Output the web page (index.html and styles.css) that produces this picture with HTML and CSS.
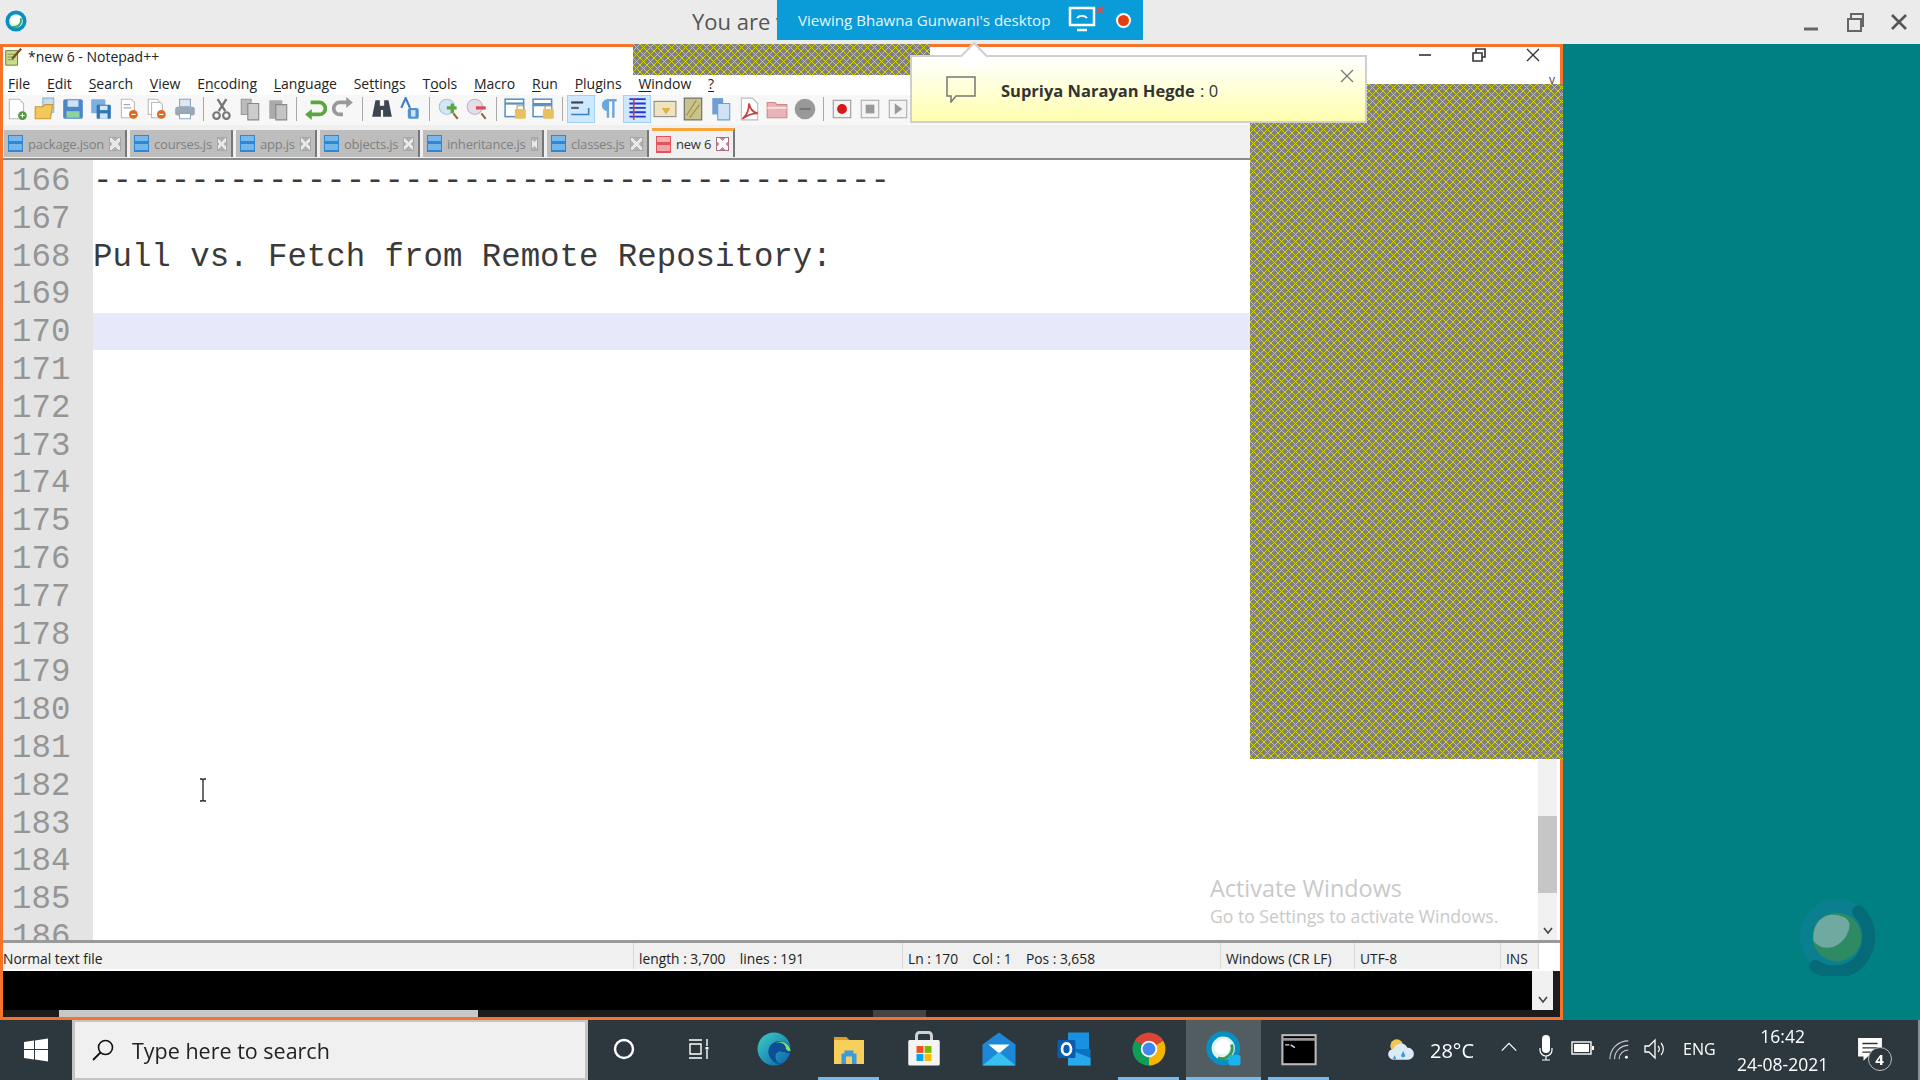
FILE: index.html
```html
<!DOCTYPE html>
<html lang="en">
<head>
  <meta charset="UTF-8" />
  <title>*new 6 - Notepad++</title>
  <link rel="stylesheet" href="styles.css">
</head>
<body>
  <div class="stage">
    <header class="meeting-bar">
      <svg class="webex-logo" viewBox="0 0 24 24"><circle cx="12" cy="12" r="9.5" fill="#dff3e8" stroke="#0a8fc4" stroke-width="4"/><path d="M7 13a6 6 0 0 1 8-7c2 1 3 3 2 6-2 4-7 5-10 1z" fill="#fff"/><path d="M17 9a7 7 0 0 1-9 9" fill="none" stroke="#35a862" stroke-width="2"/></svg>
      <span class="meeting-text">You are v</span>
      <div class="meeting-ctrls">
        <svg viewBox="0 0 24 24"><path d="M5 19h14" stroke="#666" stroke-width="3"/></svg>
        <svg viewBox="0 0 24 24"><path d="M5 9h13v12H5zM8 9V4h12v12h-2" fill="none" stroke="#666" stroke-width="2"/></svg>
        <svg viewBox="0 0 24 24"><path d="M5 5l14 14M19 5L5 19" stroke="#555" stroke-width="2.6"/></svg>
      </div>
    </header>

    <main class="desktop">
      <section class="npp">
        <div class="npp-title">
          <svg class="npp-icon" viewBox="0 0 22 22"><path d="M3 4h13v16H3z" fill="#c9dc8a" stroke="#5d7a2c"/><path d="M5 8h9M5 11h9M5 14h7" stroke="#7d8f50"/><path d="M10 13L20 2" stroke="#7a4a1c" stroke-width="2.4"/></svg>
          <span>*new 6 - Notepad++</span>
          <div class="npp-ctrls">
            <svg viewBox="0 0 16 16"><path d="M2 8h12" stroke="#333" stroke-width="1.6"/></svg>
            <svg viewBox="0 0 16 16"><path d="M2 6h9v8H2zM5 6V2h9v8h-3" fill="none" stroke="#333" stroke-width="1.6"/></svg>
            <svg viewBox="0 0 16 16"><path d="M2 2l12 12M14 2L2 14" stroke="#333" stroke-width="1.4"/></svg>
          </div>
        </div>

        <nav class="npp-menu">
          <span><u>F</u>ile</span><span><u>E</u>dit</span><span><u>S</u>earch</span><span><u>V</u>iew</span><span>E<u>n</u>coding</span><span><u>L</u>anguage</span><span>Se<u>t</u>tings</span><span>T<u>o</u>ols</span><span><u>M</u>acro</span><span><u>R</u>un</span><span><u>P</u>lugins</span><span><u>W</u>indow</span><span><u>?</u></span>
          <i class="menu-x">v</i>
        </nav>

        <div class="toolbar">
          <svg viewBox="0 0 22 22"><path d="M4 2h9l4 4v14H4z" fill="#fff" stroke="#bbb"/><circle cx="16" cy="17" r="4" fill="#4f9a3c"/><path d="M14 17h4M16 15v4" stroke="#fff"/></svg>
          <svg viewBox="0 0 22 22"><path d="M9 1h10v13H9z" fill="#c8dcf0" stroke="#8fb0d0"/><path d="M2 9h7l2-2h7l-2 13H2z" fill="#f2c75c" stroke="#c99a2e"/></svg>
          <svg viewBox="0 0 22 22"><rect x="2" y="2" width="18" height="18" rx="2" fill="#4c86c8"/><rect x="6" y="3" width="10" height="6" fill="#cfe2f5"/><rect x="5" y="13" width="12" height="6" fill="#8fd0a0"/></svg>
          <svg viewBox="0 0 22 22"><rect x="2" y="2" width="13" height="13" rx="1" fill="#7db0dc"/><rect x="7" y="7" width="13" height="13" rx="1" fill="#2f76b8"/><rect x="10" y="8" width="7" height="4" fill="#d5e6f5"/><rect x="10" y="15" width="7" height="5" fill="#cfe2f5"/></svg>
          <svg viewBox="0 0 22 22"><path d="M4 2h9l3 3v14H4z" fill="#fff" stroke="#bbb"/><path d="M6 7h6M6 10h7" stroke="#aaa"/><circle cx="15" cy="16" r="4" fill="#dd6a20"/><path d="M13 16h4" stroke="#fff"/></svg>
          <svg viewBox="0 0 22 22"><path d="M3 2h8l2 2v12H3z" fill="#fff" stroke="#bbb"/><path d="M6 5h8l2 2v12H6z" fill="#fff" stroke="#bbb"/><circle cx="15" cy="16" r="4" fill="#dd6a20"/><path d="M13 16h4" stroke="#fff"/></svg>
          <svg viewBox="0 0 22 22"><path d="M6 2h10v7H6z" fill="#dce8f2" stroke="#8ea5bb"/><rect x="2" y="9" width="18" height="8" rx="2" fill="#9aa9b8"/><path d="M6 15h10v5H6z" fill="#fff" stroke="#8ea5bb"/></svg>
          <i class="tool-sep"></i>
          <svg viewBox="0 0 22 22"><path d="M15 2L8 13M7 2l7 11" stroke="#777" stroke-width="2.2"/><circle cx="6" cy="17" r="3" fill="none" stroke="#777" stroke-width="2"/><circle cx="15" cy="17" r="3" fill="none" stroke="#777" stroke-width="2"/></svg>
          <svg viewBox="0 0 22 22"><path d="M3 2h9v14H3z" fill="#bbb" stroke="#999"/><path d="M9 6h10v15H9z" fill="#ccc" stroke="#888"/></svg>
          <svg viewBox="0 0 22 22"><path d="M3 3h12v17H3z" fill="#aaa"/><path d="M9 7h10v14H9z" fill="#c4c4c4" stroke="#888"/></svg>
          <i class="tool-sep"></i>
          <svg viewBox="0 0 22 22"><path d="M7 5h8a5 5 0 0 1 0 11H6" fill="none" stroke="#5aa63c" stroke-width="3.4"/><path d="M8 11l-6 5 6 5z" fill="#5aa63c"/></svg>
          <svg viewBox="0 0 22 22"><path d="M15 5H8a5 5 0 0 0 0 11h3" fill="none" stroke="#999" stroke-width="3.4"/><path d="M14 0l6 5-6 5z" fill="#999"/></svg>
          <i class="tool-sep wide"></i>
          <svg viewBox="0 0 22 22"><path d="M5 3h4v5h4V3h4l3 15h-8v-6h-2v6H2z" fill="#3d4650"/></svg>
          <svg viewBox="0 0 22 22"><path d="M3 10L7 1l4 9" fill="none" stroke="#3c7fc0" stroke-width="2"/><rect x="9" y="10" width="10" height="10" rx="2" fill="#4d94cf"/><path d="M12 12h4v6h-4z" fill="#cfe4f5"/></svg>
          <i class="tool-sep wide"></i>
          <svg viewBox="0 0 22 22"><circle cx="9" cy="9" r="7" fill="#d5e6f5" stroke="#a9c4dd"/><path d="M9 10h9M14 6v9" stroke="#5aa63c" stroke-width="3"/><path d="M15 15l4 5" stroke="#8a6d3b" stroke-width="2"/></svg>
          <svg viewBox="0 0 22 22"><circle cx="9" cy="9" r="7" fill="#e6dcea" stroke="#c2b4cd"/><path d="M10 10h9" stroke="#d85050" stroke-width="3"/><path d="M15 15l4 5" stroke="#8a6d3b" stroke-width="2"/></svg>
          <i class="tool-sep wide"></i>
          <svg viewBox="0 0 22 22"><rect x="1" y="2" width="17" height="16" fill="#fff" stroke="#5c8fc0" stroke-width="1.4"/><path d="M1 6h17" stroke="#5c8fc0" stroke-width="2"/><rect x="10" y="11" width="10" height="9" rx="1" fill="#e8c060"/><path d="M12 11V8h6v3" fill="none" stroke="#c99a2e"/></svg>
          <svg viewBox="0 0 22 22"><rect x="1" y="2" width="17" height="16" fill="#fff" stroke="#5c8fc0" stroke-width="1.4"/><path d="M1 7h17" stroke="#5c8fc0" stroke-width="3"/><rect x="10" y="11" width="10" height="9" rx="1" fill="#e8c060"/><path d="M12 11V8h6v3" fill="none" stroke="#c99a2e"/></svg>
          <i class="tool-sep"></i>
          <svg class="on" viewBox="0 0 22 22"><path d="M2 5h11" stroke="#444" stroke-width="2"/><path d="M2 10h7" stroke="#666" stroke-width="2"/><path d="M2 16h12M18 10v6h-5" fill="none" stroke="#3c80c0" stroke-width="1.5"/></svg>
          <svg viewBox="0 0 22 22"><path d="M9 3h9M10 3v16M15 3v16M10 3a4 4 0 0 0 0 9" fill="#6aa7dc" stroke="#6aa7dc" stroke-width="2.2"/></svg>
          <svg class="on" viewBox="0 0 22 22"><path d="M4 2h15M4 6h15M4 10h15M4 14h15M4 18h15" stroke="#2434dd" stroke-width="1.7"/><path d="M8 1v20" stroke="#d04040" stroke-width="1.5"/></svg>
          <svg viewBox="0 0 22 22"><rect x="1" y="4" width="20" height="14" fill="#efe4c0" stroke="#888"/><path d="M8 10h8l-4 6z" fill="#e0b040"/></svg>
          <svg viewBox="0 0 22 22"><rect x="3" y="1" width="16" height="20" fill="#c6c48a" stroke="#666"/><path d="M5 17L14 3M8 19l9-12" stroke="#a6883a"/></svg>
          <svg viewBox="0 0 22 22"><path d="M3 1h10v15H3z" fill="#6f9fd0"/><path d="M8 6h11v15H8z" fill="#cfe2f5" stroke="#6f9fd0"/></svg>
          <svg viewBox="0 0 22 22"><path d="M4 1h10l5 5v15H4z" fill="#fff" stroke="#bbb"/><path d="M5 20c5-4 6-9 6-14 1 5 3 8 8 9-5 0-9 1-14 5z" fill="none" stroke="#c84040" stroke-width="1.6"/></svg>
          <svg viewBox="0 0 22 22"><path d="M2 5h7l2 2h9v12H2z" fill="#e8b4b8" stroke="#c88"/><path d="M2 10h18" stroke="#fff"/></svg>
          <svg viewBox="0 0 22 22"><circle cx="11" cy="11" r="9.5" fill="#999"/><path d="M6 11h10" stroke="#777" stroke-width="2"/></svg>
          <i class="tool-sep"></i>
          <svg viewBox="0 0 22 22"><rect x="3" y="3" width="16" height="16" fill="#f4f4f4" stroke="#999"/><circle cx="11" cy="11" r="4.5" fill="#d81818"/></svg>
          <svg viewBox="0 0 22 22"><rect x="3" y="3" width="16" height="16" fill="#f4f4f4" stroke="#aaa"/><rect x="7" y="7" width="8" height="8" fill="#999"/></svg>
          <svg viewBox="0 0 22 22"><rect x="3" y="3" width="16" height="16" fill="#f4f4f4" stroke="#aaa"/><path d="M8 6l7 5-7 5z" fill="#999"/></svg>
        </div>

        <div class="tabs">
          <div class="tab tab-package"><i class="floppy"></i><span>package.json</span><b class="tab-x"></b></div>
          <div class="tab tab-courses"><i class="floppy"></i><span>courses.js</span><b class="tab-x"></b></div>
          <div class="tab tab-app"><i class="floppy"></i><span>app.js</span><b class="tab-x"></b></div>
          <div class="tab tab-objects"><i class="floppy"></i><span>objects.js</span><b class="tab-x"></b></div>
          <div class="tab tab-inherit"><i class="floppy"></i><span>inheritance.js</span><b class="tab-x"></b></div>
          <div class="tab tab-classes"><i class="floppy"></i><span>classes.js</span><b class="tab-x"></b></div>
          <div class="tab tab-active"><i class="floppy"></i><span>new 6</span><b class="tab-x"></b></div>
        </div>

        <div class="editor">
          <div class="gutter">
            <div>166</div><div>167</div><div>168</div><div>169</div><div>170</div><div>171</div><div>172</div>
            <div>173</div><div>174</div><div>175</div><div>176</div><div>177</div><div>178</div><div>179</div>
            <div>180</div><div>181</div><div>182</div><div>183</div><div>184</div><div>185</div><div>186</div>
          </div>
          <div class="code">
            <div>-----------------------------------------</div>
            <div>&nbsp;</div>
            <div>Pull vs. Fetch from Remote Repository:</div>
            <div>&nbsp;</div>
            <div class="current">&nbsp;</div>
          </div>
          <div class="vscroll">
            <div class="vthumb"></div>
            <svg class="chev" viewBox="0 0 12 8"><path d="M2 1l4 5 4-5" fill="none" stroke="#444" stroke-width="1.6"/></svg>
          </div>
        </div>

        <footer class="status">
          <div>Normal text file</div>
          <div>length : 3,700 &nbsp;&nbsp; lines : 191</div>
          <div>Ln : 170 &nbsp;&nbsp; Col : 1 &nbsp;&nbsp; Pos : 3,658</div>
          <div>Windows (CR LF)</div>
          <div>UTF-8</div>
          <div>INS</div>
          <div></div>
        </footer>

        <div class="console">
          <div class="console-black"></div>
          <div class="console-scroll"><svg class="chev" viewBox="0 0 12 8"><path d="M2 1l4 5 4-5" fill="none" stroke="#444" stroke-width="1.6"/></svg></div>
        </div>
        <div class="hscroll"><div class="hthumb"></div><div class="hdim"></div></div>
      </section>
      <div class="teal"></div>
    </main>

    <footer class="taskbar">
      <svg class="start" viewBox="0 0 24 24"><path d="M0 4l10-1.4V11H0zM11 2.4L24 .6V11H11zM0 12h10v9.4L0 20zM11 12h13v11.4l-13-1.8z" fill="#fff"/></svg>
      <div class="search">
        <svg viewBox="0 0 24 24"><circle cx="14.5" cy="9.5" r="7" fill="none" stroke="#111" stroke-width="1.6"/><path d="M9.5 14.5L2 22" stroke="#111" stroke-width="1.8"/></svg>
        <span>Type here to search</span>
      </div>
      <div class="task-apps">
        <div class="app"><svg viewBox="0 0 24 24"><circle cx="12" cy="12" r="9" fill="none" stroke="#fff" stroke-width="2.4"/></svg></div>
        <div class="app"><svg viewBox="0 0 24 24"><path d="M2 3h13M2 21h13M3 7h11v10H3zM20 2v7M20 13v9" fill="none" stroke="#fff" stroke-width="1.4"/><rect x="18.5" y="10" width="3" height="2.5" fill="#fff"/></svg></div>
        <div class="app"><svg class="big" viewBox="0 0 24 24"><defs><linearGradient id="edgeg" x1="0" y1="0" x2="1" y2="1"><stop offset="0" stop-color="#3bd0c0"/><stop offset="1" stop-color="#0a5fb0"/></linearGradient></defs><circle cx="12" cy="12" r="11" fill="url(#edgeg)"/><path d="M23 14c0-6-5-8-9-7-5 1-7 6-5 10 2 4 6 6 9 5-4 0-5-3-5-5 0-3 3-4 5-3 2 0 3 2 5 0z" fill="#0c4f97"/><path d="M23 13c-1-5-6-7-10-5 4-1 7 1 7 4 1 1 2 2 3 1z" fill="#7fe07a"/></svg></div>
        <div class="app open"><svg class="big" viewBox="0 0 24 24"><path d="M2 4h8l2 2h10v16H2z" fill="#f7cf5a"/><path d="M2 4h8l2 2H2z" fill="#d99f20"/><path d="M7 22v-7h2v-2h6v2h2v7h-3v-5H10v5z" fill="#3c9ae0"/></svg></div>
        <div class="app"><svg class="big" viewBox="0 0 24 24"><path d="M7 7V3a2 2 0 0 1 2-2h6a2 2 0 0 1 2 2v4" fill="none" stroke="#d0d0d0" stroke-width="2"/><rect x="1.500" y="6" width="21" height="17" rx="1" fill="#f4f4f4"/><rect x="7" y="10" width="4.600" height="4.600" fill="#f25022"/><rect x="12.400" y="10" width="4.600" height="4.600" fill="#7fba00"/><rect x="7" y="15.400" width="4.600" height="4.600" fill="#00a4ef"/><rect x="12.400" y="15.400" width="4.600" height="4.600" fill="#ffb900"/></svg></div>
        <div class="app"><svg class="big" viewBox="0 0 24 24"><path d="M1 9l11-8 11 8v14H1z" fill="#1e88d8"/><path d="M5 9h14l-7 6z" fill="#fff"/><path d="M1 23l11-9 11 9z" fill="#38c0f0"/></svg></div>
        <div class="app"><svg class="big" viewBox="0 0 24 24"><path d="M8 1h14v12H8z" fill="#1a90e0"/><path d="M8 12h15v11H8z" fill="#0f70c0"/><path d="M8 12l15 6v5H8z" fill="#28a8e8"/><rect x="1" y="6" width="12" height="12" rx="1" fill="#0a5cb0"/><ellipse cx="7" cy="12" rx="3" ry="3.800" fill="none" stroke="#fff" stroke-width="1.800"/></svg></div>
        <div class="app open"><svg class="big" viewBox="0 0 24 24"><path d="M12 12L2.500 6.500A11 11 0 0 1 21.500 6.500z" fill="#db4437"/><path d="M12 12L2.500 6.500A11 11 0 0 0 12 23z" fill="#0f9d58"/><path d="M12 12L21.500 6.500A11 11 0 0 1 12 23z" fill="#f4b400"/><circle cx="12" cy="12" r="5.500" fill="#fff"/><circle cx="12" cy="12" r="4.300" fill="#4285f4"/></svg></div>
        <div class="app current-app"><svg class="big" viewBox="0 0 24 24"><circle cx="11.500" cy="11.500" r="9.500" fill="#dff3e8" stroke="#0a8fc4" stroke-width="3.500"/><path d="M6 13a6 6 0 0 1 8-7c2 1 3 3 2 6-2 4-7 5-10 1z" fill="#fff"/><path d="M17 9a7 7 0 0 1-9 9" fill="none" stroke="#2f9c5c" stroke-width="2"/><rect x="15" y="16" width="8" height="7" rx="1.500" fill="#1ab4ec"/></svg></div>
        <div class="app open"><svg class="big" viewBox="0 0 26 24"><rect x="1" y="2" width="24" height="21" fill="#000" stroke="#bbb" stroke-width="1.500"/><path d="M1 5h24" stroke="#999" stroke-width="2"/><path d="M3 9h3M7 9l3 2" stroke="#ddd"/></svg></div>
      </div>
      <div class="tray">
        <svg class="weather" viewBox="0 0 28 26"><circle cx="10" cy="9" r="6" fill="#f5c84c"/><path d="M7 22a5 5 0 0 1 0-10 7 7 0 0 1 13-1 5.500 5.500 0 0 1 1 11z" fill="#dbeaf7"/><path d="M16 14l-2 4a2 2 0 0 0 4 0zM8 18l-1.500 3a1.600 1.600 0 0 0 3 0z" fill="#3f9be0"/></svg>
        <span class="temp">28°C</span>
        <svg class="chevup" viewBox="0 0 20 12"><path d="M2 10l8-8 8 8" fill="none" stroke="#fff" stroke-width="1.400"/></svg>
        <svg class="mic" viewBox="0 0 16 28"><rect x="4" y="1" width="8" height="18" rx="4" fill="#fff"/><path d="M2 14v2a6 6 0 0 0 12 0v-2M8 22v4M4 26h8" fill="none" stroke="#fff" stroke-width="1.200"/></svg>
        <svg class="batt" viewBox="0 0 24 16"><rect x="1" y="2" width="19" height="12" fill="none" stroke="#fff" stroke-width="1.400"/><rect x="3" y="4" width="15" height="8" fill="#fff"/><rect x="21" y="6" width="2" height="4" fill="#fff"/></svg>
        <svg class="wifi" viewBox="0 0 24 24"><path d="M2 22A20 20 0 0 1 22 2M7 22A15 15 0 0 1 22 7M12 22a10 10 0 0 1 10-10" fill="none" stroke="#ccc" stroke-width="1.200" transform="translate(-1 0)"/><circle cx="19" cy="20" r="1.600" fill="#fff"/></svg>
        <svg class="speaker" viewBox="0 0 24 24"><path d="M2 9h4l6-6v18l-6-6H2z" fill="none" stroke="#fff" stroke-width="1.300"/><path d="M15 9a4 4 0 0 1 0 6M18 6a9 9 0 0 1 0 12" fill="none" stroke="#fff" stroke-width="1.200"/></svg>
        <span class="lang">ENG</span>
        <div class="clock"><div>16:42</div><div>24-08-2021</div></div>
        <div class="notif">
          <svg viewBox="0 0 24 24"><path d="M1 1h22v17H10l-4 4v-4H1z" fill="#fff"/><path d="M5 6h14M5 10h14M5 14h8" stroke="#333" stroke-width="1.200"/></svg>
          <b class="notif-count">4</b>
        </div>
      </div>
    </footer>

    <!-- cosas que van encima de la ventana -->
    <div class="hatch hatch-top"></div>
    <div class="hatch hatch-right"></div>
    <div class="activate">
      <div class="activate-big">Activate Windows</div>
      <div class="activate-small">Go to Settings to activate Windows.</div>
    </div>
    <svg class="ibeam" viewBox="0 0 10 24"><path d="M2 1h2l1 1 1-1h2M5 2v20M2 23h2l1-1 1 1h2" fill="none" stroke="#222" stroke-width="1.300"/></svg>
    <svg class="float-logo" viewBox="0 0 80 80"><ellipse cx="40" cy="40" rx="38" ry="39" fill="#0a7f90"/><path d="M62 14c14 14 14 34 2 50-10 12-30 16-46 6" fill="none" stroke="#066b78" stroke-width="13" stroke-linecap="round"/><circle cx="40" cy="40" r="25" fill="#2e8a62"/><path d="M16 44c-2-20 12-30 26-26 10 2 14 8 8 20-8 14-24 18-34 6z" fill="#6fa9a0"/></svg>

    <div class="viewing">
      <span>Viewing Bhawna Gunwani's desktop</span>
      <svg class="viewing-icon" viewBox="0 0 36 28"><rect x="2" y="3" width="24" height="17" fill="none" stroke="#fff" stroke-width="2.500"/><path d="M9 13a6 5 0 0 1 10 0" fill="none" stroke="#fff" stroke-width="2"/><path d="M9 25h10" stroke="#fff" stroke-width="2.500"/><path d="M29 2l6 6M35 2l-6 6" stroke="#e04a4a" stroke-width="2"/></svg>
      <i class="rec-dot"></i>
    </div>

    <div class="popup">
      <i class="popup-caret"></i>
      <svg class="popup-bubble" viewBox="0 0 32 28"><path d="M2 2h28v19H11l-5 6v-6H2z" fill="none" stroke="#777" stroke-width="1.500"/></svg>
      <span class="popup-text"><b>Supriya Narayan Hegde</b> : 0</span>
      <svg class="popup-x" viewBox="0 0 14 14"><path d="M1 1l12 12M13 1L1 13" stroke="#777" stroke-width="1.300"/></svg>
    </div>
  </div>
</body>
</html>
```

FILE: styles.css
```css
* {
  box-sizing: border-box;
}

html, body {
  margin: 0;
  height: 100%;
  overflow: hidden;
  background: #008080;
}

.stage {
  position: relative;
  width: 1920px;
  height: 1080px;
  display: flex;
  flex-direction: column;
  overflow: hidden;
  font-family: 'Open Sans', 'Noto Sans', sans-serif;
  filter: blur(0.45px);
}

/* barra de arriba */
.meeting-bar {
  height: 44px;
  flex: none;
  background: #ebebeb;
  display: flex;
  align-items: center;
  padding-left: 5px;
}

.webex-logo {
  width: 22px;
  height: 24px;
  margin-top: -3px;
}

.meeting-text {
  margin-left: 665px;
  margin-top: -3px;
  font-size: 22px;
  color: #555;
  white-space: nowrap;
}

.meeting-ctrls {
  margin-left: auto;
  margin-right: 9px;
  display: flex;
  gap: 20px;
}

.meeting-ctrls svg {
  width: 24px;
  height: 24px;
}

.desktop {
  flex: 1;
  display: flex;
  min-height: 0;
}

.teal {
  flex: 1;
  background: #008080;
}

/* ventana notepad */
.npp {
  width: 1563px;
  flex: none;
  background: #fff;
  border: 3px solid #f5742a;
  display: flex;
  flex-direction: column;
  font-size: 14px;
  color: #222;
}

.npp-title {
  height: 28px;
  flex: none;
  display: flex;
  align-items: flex-start;
  line-height: 20px;
}

.npp-icon {
  width: 20px;
  height: 22px;
  margin-top: -1px;
}

.npp-title span {
  margin-left: 5px;
}

.npp-ctrls {
  margin-left: auto;
  display: flex;
  gap: 38px;
  padding-right: 19px;
}

.npp-ctrls svg {
  width: 16px;
  height: 16px;
}

.npp-menu {
  height: 20px;
  flex: none;
  position: relative;
  display: flex;
  align-items: center;
  gap: 16.8px;
  padding-left: 5px;
  padding-bottom: 4px;
  font-size: 14px;
}

.npp-menu u {
  text-underline-offset: 2px;
}

.menu-x {
  position: absolute;
  right: 5px;
  top: -4px;
  font-style: normal;
  font-size: 12px;
  color: #444;
}

.toolbar {
  height: 30px;
  flex: none;
  background: #f7f7f7;
  display: flex;
  align-items: center;
  padding-bottom: 2px;
}

.toolbar svg {
  width: 28px;
  height: 28px;
  padding: 1px;
  flex: none;
  border: 1px solid transparent;
}

.toolbar svg.on {
  background: #cde8ff;
  border-color: #9fd2fb;
}

.tool-sep {
  width: 1px;
  height: 24px;
  margin: 0 4px;
  flex: none;
  background: #a8a8a8;
}

.tool-sep.wide {
  margin: 0 5px;
}

.tabs {
  height: 35px;
  flex: none;
  display: flex;
  align-items: flex-end;
  gap: 3px;
  background: #f0f0f0;
  border-bottom: 2px solid #8a8a8a;
  padding-left: 1px;
  padding-bottom: 1px;
}

.tab {
  height: 27px;
  display: flex;
  align-items: center;
  gap: 5px;
  padding: 0 4px;
  background: #bdbdbd;
  color: #808080;
  font-size: 13px;
  border-right: 2px solid #777;
  letter-spacing: -0.2px;
  white-space: nowrap;
}

.tab-package { width: 123px; }
.tab-courses { width: 103px; }
.tab-app { width: 81px; }
.tab-objects { width: 100px; }
.tab-inherit { width: 121px; }
.tab-classes { width: 102px; }

.tab-active {
  width: 83px;
  height: 29px;
  background: #f0f0f0;
  color: #333;
  border-top: 3px solid #f9a53a;
}

.floppy {
  width: 15px;
  height: 17px;
  flex: none;
  background: linear-gradient(#79b8ea 0 30%, #2f86d4 30% 55%, #74b6e8 55% 90%, #2f86d4 90%);
  border: 1px solid #2f86d4;
}

.tab-active .floppy {
  background: linear-gradient(#f2b1b1 0 30%, #e2535b 30% 55%, #f0a6a6 55% 90%, #e2535b 90%);
  border-color: #e2535b;
}

.tab-x {
  width: 14px;
  height: 14px;
  margin-left: auto;
  border: 1px solid #a6a6a6;
  background:
    linear-gradient(45deg, transparent 40%, #e8e8e8 40% 60%, transparent 60%),
    linear-gradient(-45deg, transparent 40%, #e8e8e8 40% 60%, transparent 60%),
    #b0b0b0;
}

.tab-active .tab-x {
  border-color: #b06a80;
  background:
    linear-gradient(45deg, transparent 38%, #fff 38% 62%, transparent 62%),
    linear-gradient(-45deg, transparent 38%, #fff 38% 62%, transparent 62%),
    #c08a9a;
}

.editor {
  height: 780px;
  flex: none;
  display: flex;
  overflow: hidden;
  font-family: 'Liberation Mono', monospace;
  font-size: 32.4px;
  line-height: 37.8px;
}

.gutter {
  width: 90px;
  flex: none;
  background: #e4e4e4;
  color: #959595;
  padding: 3px 0 0 9px;
}

.code {
  flex: 1;
  color: #3a3a3a;
  padding-top: 3px;
}

.code div {
  white-space: pre;
}

.code .current {
  margin-top: -1.5px;
  background: #e8e8fb;
}

.vscroll {
  width: 22px;
  flex: none;
  position: relative;
  background: #f0f0f0;
  border-right: 3px solid #fff;
}

.vthumb {
  position: absolute;
  left: 0;
  right: 0;
  top: 656px;
  height: 77px;
  background: #c6c6c6;
}

.vscroll .chev {
  position: absolute;
  left: 4px;
  bottom: 5px;
}

.chev {
  width: 12px;
  height: 8px;
}

.status {
  height: 31px;
  flex: none;
  display: grid;
  grid-template-columns: 631px 269px 318px 134px 146px 38px 1fr;
  background: #f0f0f0;
  border-top: 3px solid #9a9a9a;
  border-bottom: 2px solid #fff;
  font-size: 13.8px;
  line-height: 31px;
  color: #222;
}

.status div {
  height: 26px;
  padding-left: 5px;
  border-right: 1px solid #d8d8d8;
  white-space: nowrap;
}

.status div:first-child {
  padding-left: 0;
}

.status div:last-child {
  background: #fff;
  border: none;
}

.console {
  height: 39px;
  flex: none;
  display: flex;
  background: #1c1c1c;
}

.console-black {
  width: 1529px;
  background: #000;
}

.console-scroll {
  width: 21px;
  background: #f0f0f0;
  display: flex;
  justify-content: center;
  align-items: flex-end;
  padding-bottom: 6px;
}

.hscroll {
  flex: 1;
  position: relative;
  background: #1c1c1c;
}

.hthumb {
  position: absolute;
  left: 56px;
  width: 419px;
  top: 0;
  bottom: 0;
  background: #c8c8c8;
}

.hdim {
  position: absolute;
  left: 870px;
  width: 53px;
  top: 0;
  bottom: 0;
  background: #444;
}

/* trama amarilla donde no llego la imagen */
.hatch {
  position: absolute;
  background-color: #808080;
  background-image:
    linear-gradient(45deg, transparent 45%, #d8d800 45% 55%, transparent 55%),
    linear-gradient(-45deg, transparent 45%, #d8d800 45% 55%, transparent 55%);
  background-size: 7px 7px;
}

.hatch-top {
  left: 633px;
  top: 44px;
  width: 297px;
  height: 31px;
}

.hatch-right {
  left: 1250px;
  top: 84px;
  width: 313px;
  height: 675px;
}

.activate {
  position: absolute;
  left: 1210px;
  top: 872px;
  color: #c9c9c9;
}

.activate-big {
  font-size: 23.4px;
  line-height: 32px;
}

.activate-small {
  font-size: 17.6px;
  line-height: 24px;
}

.ibeam {
  position: absolute;
  left: 198px;
  top: 778px;
  width: 10px;
  height: 24px;
}

.float-logo {
  position: absolute;
  left: 1798px;
  top: 898px;
  width: 78px;
  height: 78px;
}

/* aviso azul */
.viewing {
  position: absolute;
  left: 777px;
  top: 0;
  width: 366px;
  height: 40px;
  background: #0a9cd8;
  color: #e6f6fd;
  font-size: 15.1px;
  display: flex;
  align-items: center;
  padding-left: 21px;
}

.viewing-icon {
  width: 36px;
  height: 28px;
  margin-left: 18px;
  margin-top: -2px;
}

.rec-dot {
  width: 11px;
  height: 11px;
  margin-left: 14px;
  border-radius: 50%;
  background: #e2400f;
  box-shadow: 0 0 0 2px #fff;
}

.popup {
  position: absolute;
  left: 910px;
  top: 55px;
  width: 457px;
  height: 68px;
  background: linear-gradient(#fff, #ffffb0);
  border: 2px solid #cfcfcf;
  display: flex;
  align-items: center;
  padding-left: 33px;
}

.popup-caret {
  position: absolute;
  left: 52px;
  top: -11px;
  width: 20px;
  height: 20px;
  background: #fff;
  border: 2px solid #cfcfcf;
  border-right: none;
  border-bottom: none;
  transform: rotate(45deg);
}

.popup-bubble {
  width: 32px;
  height: 28px;
}

.popup-text {
  margin-left: 24px;
  margin-top: 3px;
  font-size: 16.5px;
  color: #333;
}

.popup-text b {
  margin-right: 1px;
}

.popup-x {
  position: absolute;
  right: 11px;
  top: 12px;
  width: 14px;
  height: 14px;
}

/* barra de tareas */
.taskbar {
  height: 60px;
  flex: none;
  background: #2c383d;
  display: flex;
  align-items: stretch;
  color: #fff;
  border-right: 2px solid #8a8f92;
}

.start {
  width: 24px;
  height: 24px;
  margin: 18px 24px 0 24px;
}

.search {
  width: 516px;
  background: #f0f0f0;
  border: 2px solid #c4c4c4;
  border-width: 2px 3px;
  display: flex;
  align-items: center;
  padding-left: 16px;
  color: #222;
  font-size: 21.5px;
}

.search svg {
  width: 24px;
  height: 26px;
  margin-right: 17px;
}

.task-apps {
  display: flex;
  margin-left: -2px;
}

.app {
  width: 75px;
  display: flex;
  align-items: center;
  justify-content: center;
  position: relative;
  border-bottom: 3px solid transparent;
}

.app svg {
  width: 24px;
  height: 24px;
}

.app svg.big {
  width: 36px;
  height: 36px;
}

.app.open::after {
  content: '';
  position: absolute;
  left: 7px;
  right: 7px;
  bottom: -3px;
  height: 3px;
  background: #76b9ed;
}

.current-app {
  background: #525d62;
  border-bottom-color: #76b9ed;
}

.tray {
  flex: 1;
  position: relative;
  display: flex;
  align-items: center;
  font-size: 16px;
}

.weather {
  width: 30px;
  height: 28px;
  margin-left: 50px;
}

.temp {
  font-size: 20px;
  margin-left: 14px;
}

.chevup {
  width: 18px;
  height: 12px;
  margin-left: 26px;
  margin-top: -6px;
}

.mic {
  width: 16px;
  height: 30px;
  margin-left: 20px;
  margin-top: -4px;
}

.batt {
  width: 24px;
  height: 16px;
  margin-left: 17px;
  margin-top: -4px;
}

.wifi {
  width: 22px;
  height: 22px;
  margin-left: 14px;
}

.speaker {
  width: 24px;
  height: 24px;
  margin-left: 12px;
  margin-top: -2px;
}

.lang {
  margin-left: 16px;
  margin-top: -2px;
}

.clock {
  margin-left: 15px;
  width: 104px;
  text-align: center;
  font-size: 17.5px;
  line-height: 28px;
}

.notif {
  position: relative;
  width: 26px;
  height: 26px;
  margin-left: 22px;
}

.notif svg {
  width: 26px;
  height: 26px;
}

.notif-count {
  position: absolute;
  left: 11px;
  top: 10px;
  width: 24px;
  height: 24px;
  border-radius: 50%;
  background: #2c383d;
  border: 1px solid #bbb;
  font-size: 15px;
  line-height: 22px;
  text-align: center;
  font-weight: 700;
}
```
